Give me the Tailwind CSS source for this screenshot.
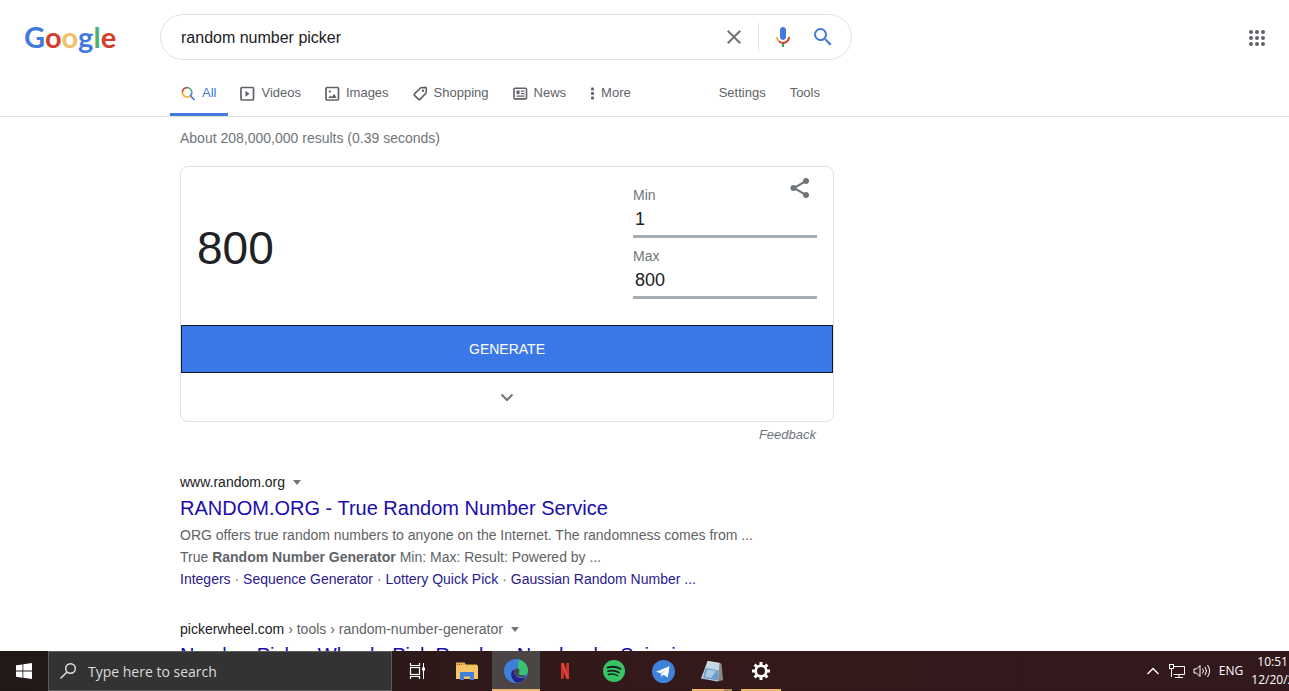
<!DOCTYPE html>
<html lang="en">
  <head>
    <meta charset="UTF-8" />
    <meta name="viewport" content="width=device-width, initial-scale=1.0" />
    <title>random number picker - Google Search</title>
    <script src="https://cdn.jsdelivr.net/npm/@tailwindcss/browser@4"></script>
  </head>
  <body
    class="h-screen overflow-hidden bg-white font-['Liberation_Sans',Arial,sans-serif] text-sm text-[#5f6368]"
  >
    <!-- ---------------- Header ---------------- -->
    <header class="border-b border-[#dfe1e5]">
      <div class="flex items-center pt-[14px]">
        <a
          href="#"
          aria-label="Google"
          class="w-[160px] shrink-0 pl-6 font-[Lato,sans-serif] text-[29px] leading-[44px] font-bold"
          ><span class="text-[#4179dd]">G</span
          ><span class="text-[#d23f2d]">o</span
          ><span class="text-[#f0c069]">o</span
          ><span class="text-[#4179dd]">g</span
          ><span class="text-[#4fae72]">l</span
          ><span class="text-[#d23f2d]">e</span></a
        >
        <form
          class="flex h-[46px] w-[692px] items-center rounded-full border border-[#dfe1e5] pr-4 pl-5"
        >
          <input
            type="text"
            aria-label="Search"
            value="random number picker"
            class="min-w-0 flex-1 pt-[2px] text-base text-[#202124] outline-none"
          />
          <button type="button" aria-label="Clear" class="px-3">
            <svg class="h-6 w-6" viewBox="0 0 24 24" fill="#70757a">
              <path
                d="M19 6.41L17.59 5 12 10.59 6.41 5 5 6.41 10.59 12 5 17.59 6.41 19 12 13.41 17.59 19 19 17.59 13.41 12z"
              />
            </svg>
          </button>
          <span class="mr-3 h-7 border-l border-[#dfe1e5]"></span>
          <button type="button" aria-label="Search by voice" class="mr-4">
            <svg class="h-6 w-6" viewBox="0 0 24 24">
              <path
                fill="#4179dd"
                d="M12 15c1.66 0 3-1.31 3-2.97V5c0-1.66-1.34-3-3-3S9 3.34 9 5v7c0 1.66 1.34 3 3 3z"
              />
              <path fill="#34a853" d="M11 18.1h2V22h-2z" />
              <path
                fill="#f0b43c"
                d="M7.05 16.87A6.9 6.9 0 0 1 5 12h2c0 1.45.56 2.42 1.47 3.35z"
              />
              <path
                fill="#d23f2d"
                d="M12 16.93a4.97 4.97 0 0 1-3.54-1.55l-1.41 1.49A6.94 6.94 0 0 0 12 19c3.87 0 6.99-2.92 6.99-7h-1.99c0 2.92-2.24 4.93-5 4.93z"
              />
            </svg>
          </button>
          <button type="submit" aria-label="Search">
            <svg class="h-6 w-6" viewBox="0 0 24 24" fill="#4179dd">
              <path
                d="M15.5 14h-.79l-.28-.27A6.47 6.47 0 0 0 16 9.5 6.5 6.5 0 1 0 9.5 16c1.61 0 3.09-.59 4.23-1.57l.27.28v.79l5 4.99L20.49 19zm-6 0C7.01 14 5 11.99 5 9.5S7.01 5 9.5 5 14 7.01 14 9.5 11.99 14 9.5 14z"
              />
            </svg>
          </button>
        </form>
        <button
          type="button"
          aria-label="Google apps"
          class="mr-5 ml-auto pt-[2px]"
        >
          <svg class="h-6 w-6" viewBox="0 0 24 24" fill="#5f6368">
            <circle cx="6" cy="6" r="2" />
            <circle cx="12" cy="6" r="2" />
            <circle cx="18" cy="6" r="2" />
            <circle cx="6" cy="12" r="2" />
            <circle cx="12" cy="12" r="2" />
            <circle cx="18" cy="12" r="2" />
            <circle cx="6" cy="18" r="2" />
            <circle cx="12" cy="18" r="2" />
            <circle cx="18" cy="18" r="2" />
          </svg>
        </button>
      </div>

      <!-- Search type tabs -->
      <nav class="flex h-14 w-[852px] items-stretch pt-[14px] pl-[170px] text-[13px]">
        <a
          href="#"
          class="flex items-center gap-[6px] border-b-[3px] border-[#4179dd] pr-3 pl-[11px] text-[#4179dd]"
        >
          <svg class="h-4 w-[15px]" viewBox="0 0 15 16" fill="none" stroke-width="1.7">
            <path stroke="#d23f2d" d="M1.4 6A4.7 4.7 0 0 1 6 1.6" />
            <path stroke="#4fae72" d="M6 1.6A4.8 4.8 0 0 1 10.8 6.400" />
            <path stroke="#4179dd" d="M10.8 6.400A4.8 4.8 0 0 1 9.400 9.800L13.500 14" />
            <path stroke="#f0b43c" d="M1.4 6A4.8 4.8 0 0 0 9.400 9.800" />
          </svg>
          All
        </a>
        <a href="#" class="mb-[3px] flex items-center gap-[6px] px-3">
          <svg class="h-4 w-[15px]" viewBox="0 0 15 16" fill="none" stroke="#5f6368">
            <rect x="1" y="1.500" width="12.500" height="12.500" rx="1" stroke-width="1.700" />
            <path d="M5.500 4.800v6l4-3z" fill="#5f6368" stroke="none" />
          </svg>
          Videos
        </a>
        <a href="#" class="mb-[3px] flex items-center gap-[6px] px-3">
          <svg class="h-4 w-[15px]" viewBox="0 0 15 16" fill="none" stroke="#5f6368">
            <rect x="1" y="1.500" width="12.500" height="12.500" rx="1" stroke-width="1.700" />
            <path d="M3.200 12l2-2.500 1.500 1.200L9.200 8l2.500 4z" fill="#5f6368" stroke="none" />
            <rect x="3.800" y="4.500" width="2" height="2" fill="#5f6368" stroke="none" />
          </svg>
          Images
        </a>
        <a href="#" class="mb-[3px] flex items-center gap-[6px] px-3">
          <svg class="h-4 w-[15px]" viewBox="0 0 15 16" fill="none" stroke="#5f6368">
            <path
              d="M7.7 1.7L12.6 1.4Q13.4 1.4 13.4 2.3L13 7.100 7 13.300Q6.300 13.900 5.600 13.300L1.500 9.400Q.9 8.700 1.500 7.900z"
              stroke-width="1.6"
            />
            <circle cx="10" cy="4.700" r="1.200" fill="#5f6368" stroke="none" />
          </svg>
          Shopping
        </a>
        <a href="#" class="mb-[3px] flex items-center gap-[6px] px-3">
          <svg class="h-4 w-[15px]" viewBox="0 0 15 16" fill="none" stroke="#5f6368">
            <rect x="1" y="2.300" width="12.500" height="10.600" rx="1" stroke-width="1.600" />
            <rect x="3.500" y="4.500" width="3" height="3.600" fill="#5f6368" stroke="none" />
            <path d="M8 5.200h3.500M8 7.700h3.500M3.500 10.200h8" stroke-width="1.200" />
          </svg>
          News
        </a>
        <a href="#" class="mb-[3px] flex items-center gap-1 pr-3 pl-[11px]">
          <svg class="h-4 w-2" viewBox="0 0 8 16" fill="#5f6368">
            <rect x="2" y="1.500" width="3" height="3" rx="1" />
            <rect x="2" y="6" width="3" height="3" rx="1" />
            <rect x="2" y="10.500" width="3" height="3" rx="1" />
          </svg>
          More
        </a>
        <a href="#" class="mb-[3px] ml-auto flex items-center px-3">Settings</a>
        <a href="#" class="mr-5 mb-[3px] flex items-center px-3">Tools</a>
      </nav>
    </header>

    <!-- ---------------- Results ---------------- -->
    <main class="ml-[180px] w-[654px]">
      <p class="pt-[11px] leading-5 text-[#70757a]">
        About 208,000,000 results (0.39 seconds)
      </p>

      <!-- Random number widget -->
      <section class="mt-[18px] rounded-lg border border-[#dfe1e5]">
        <div class="flex h-[158px]">
          <output class="flex flex-1 items-center pt-[5px] pl-4 text-[46px] text-[#202124]"
            >800</output
          >
          <div class="w-[184px] pt-[18px]">
            <label for="min" class="block leading-5 text-[#70757a]">Min</label>
            <input
              id="min"
              type="text"
              value="1"
              class="mb-2 block h-[33px] w-full border-b-[3px] border-[#a3adb3] px-[2px] pb-[2px] text-lg font-medium text-[#202124]"
            />
            <label for="max" class="block leading-5 text-[#70757a]">Max</label>
            <input
              id="max"
              type="text"
              value="800"
              class="block h-[33px] w-full border-b-[3px] border-[#a3adb3] px-[2px] pb-[2px] text-lg font-medium text-[#202124]"
            />
          </div>
          <div class="w-4">
            <button type="button" aria-label="Share" class="-ml-[29px] pt-[9px]">
              <svg class="h-6 w-6" viewBox="0 0 24 24" fill="#70757a">
                <path d="M5.6 11.1L17.3 4.2l1 1.7L6.6 12.9z" />
                <path d="M5.6 12.9L17.3 19.8l1-1.7L6.6 11.1z" />
                <circle cx="5.5" cy="12" r="3" />
                <circle cx="18" cy="5" r="3" />
                <circle cx="18" cy="19" r="3" />
              </svg>
            </button>
          </div>
        </div>
        <button
          type="button"
          class="block h-12 w-full border border-[#101820] bg-[#3b78e7] text-white"
        >
          GENERATE
        </button>
        <button
          type="button"
          aria-label="Expand"
          class="flex h-12 w-full items-center justify-center"
        >
          <svg class="h-4 w-4" viewBox="0 0 16 16" fill="none" stroke="#70757a">
            <path d="M2.500 5.500L8 11l5.500-5.500" stroke-width="2" />
          </svg>
        </button>
      </section>
      <div class="pt-[3px] pr-[18px] text-right text-[13px] leading-5">
        <a href="#" class="text-[#70757a] italic">Feedback</a>
      </div>

      <!-- Result: random.org -->
      <article class="pt-7">
        <div class="flex items-center gap-2 leading-[19px] text-[#202124]">
          www.random.org
          <svg class="h-[5px] w-2" viewBox="0 0 8 5" fill="#70757a">
            <path d="M0 0h8L4 5z" />
          </svg>
        </div>
        <h3 class="text-xl leading-8 text-[#1a0dab]">
          <a href="#">RANDOM.ORG - True Random Number Service</a>
        </h3>
        <p class="leading-[22px]">
          ORG offers true random numbers to anyone on the Internet. The
          randomness comes from ...<br />True <b>Random Number Generator</b>
          Min: Max: Result: Powered by ...
        </p>
        <p class="leading-[22px] text-[#70757a]">
          <a href="#" class="text-[#2a1a8c]">Integers</a> ·
          <a href="#" class="text-[#2a1a8c]">Sequence Generator</a> ·
          <a href="#" class="text-[#2a1a8c]">Lottery Quick Pick</a> ·
          <a href="#" class="text-[#2a1a8c]">Gaussian Random Number ...</a>
        </p>
      </article>

      <!-- Result: pickerwheel.com -->
      <article class="pt-[30px]">
        <div class="flex items-center gap-2 leading-[19px]">
          <span
            ><span class="text-[#202124]">pickerwheel.com</span> › tools ›
            random-number-generator</span
          >
          <svg class="h-[5px] w-2" viewBox="0 0 8 5" fill="#70757a">
            <path d="M0 0h8L4 5z" />
          </svg>
        </div>
        <h3 class="text-xl leading-8 text-[#1a0dab]">
          <a href="#">Number Picker Wheel - Pick Random Number by Spinning</a>
        </h3>
      </article>
    </main>

    <!-- ---------------- Taskbar ---------------- -->
    <footer
      class="fixed bottom-0 left-0 flex h-10 w-full overflow-hidden bg-linear-to-r from-[#211817] via-[#34191a] to-[#32191c] font-['Open_Sans',sans-serif] text-white"
    >
      <button
        type="button"
        aria-label="Start"
        class="flex w-12 items-center justify-center"
      >
        <svg class="h-4 w-4" viewBox="0 0 16 16" fill="#fff">
          <path
            d="M0 2.300L6.500 1.400V7.600H0zM7.300 1.300L16 0V7.600H7.300zM0 8.400H6.500V14.700L0 13.800zM7.300 8.400H16V16L7.300 14.800z"
          />
        </svg>
      </button>
      <label
        class="flex w-[344px] items-center gap-3 border border-[#5c5c5c] bg-[#333] pl-[11px]"
      >
        <svg
          class="h-4 w-4 shrink-0"
          viewBox="0 0 16 16"
          fill="none"
          stroke="#e4e4e4"
          stroke-width="1.400"
        >
          <circle cx="10.500" cy="5.500" r="4.800" />
          <path d="M7 9L.5 15.500" />
        </svg>
        <input
          type="text"
          aria-label="Type here to search"
          placeholder="Type here to search"
          class="min-w-0 flex-1 pt-[2px] text-sm placeholder:text-[#dcdcdc]"
        />
      </label>

      <!-- Pinned apps -->
      <div class="ml-[2px] flex gap-px">
        <button
          type="button"
          aria-label="Task View"
          class="flex w-12 items-center justify-center"
        >
          <svg class="h-4 w-[18px]" viewBox="0 0 18 16" fill="none" stroke="#fff">
            <path d="M1.500 0v2.500h9V0M1.500 16v-2.500h9V16" stroke-width="1.200" />
            <rect x="1.500" y="4.500" width="9" height="7" stroke-width="1.200" />
            <path d="M14.500 0v16" stroke-width="1" />
            <rect x="13" y="4.500" width="3" height="3" fill="#fff" stroke="none" />
          </svg>
        </button>
        <button
          type="button"
          aria-label="File Explorer"
          class="flex w-12 items-center justify-center"
        >
          <svg class="h-5 w-[22px]" viewBox="0 0 22 20">
            <path d="M0 1.500h8.500l1.500 2H21V18H0z" fill="#e8b14c" />
            <path d="M0 4.500h22V18H0z" fill="#f5c466" />
            <path d="M1 3.500h6" stroke="#c8502d" stroke-dasharray="1 1" />
            <path d="M4 19v-7q0-1 1-1h12q1 0 1 1v7h-4v-3.500H8V19z" fill="#4080dc" />
          </svg>
        </button>
        <button
          type="button"
          aria-label="Microsoft Edge"
          class="flex w-12 items-center justify-center border-b-2 border-[#f0b768] bg-[#4b4645] pt-[2px]"
        >
          <svg class="h-6 w-6" viewBox="0 0 24 24">
            <circle cx="12" cy="12" r="12" fill="#3d7fd9" />
            <path
              d="M15 .4C20.500 1.800 24 6.500 24 11.500c0 3-2.500 4.700-5.500 4.700-2.500 0-4-.8-4-1.800 1.500-1.500 1.300-4.600-1-6.200z"
              fill="#38c46c"
            />
            <path
              d="M8.200 11.500c-2 3.500-1 8.500 3.500 12 4.500.2 8-1.800 10.200-5.300-4 1.600-10.700 1-11.500-4.700-.1-1 .4-2.500 1-3z"
              fill="#26218a"
            />
            <path
              d="M11.500 9.500c-1.500 1.500-1.400 4.500 0 6.500 2 2 6.500 2.800 10.500 1.500l-1.500-1.300c-2.500.4-6-.3-6-1.800 1-1.300 1.300-3.400-.2-5z"
              fill="#4b4645"
            />
          </svg>
        </button>
        <button
          type="button"
          aria-label="Netflix"
          class="flex w-12 items-center justify-center"
        >
          <svg class="h-4 w-2" viewBox="0 0 8 16">
            <path d="M0 0h2.800v15.500L0 16zM5.200 0H8v16l-2.800-.5z" fill="#d0352c" />
            <path d="M0 0h2.800L8 16l-2.800-.5z" fill="#e8412f" />
          </svg>
        </button>
        <button
          type="button"
          aria-label="Spotify"
          class="flex w-12 items-center justify-center"
        >
          <svg class="h-[22px] w-[22px]" viewBox="0 0 22 22" fill="none">
            <circle cx="11" cy="11" r="11" fill="#35c565" />
            <g stroke="#1b1b1b" stroke-linecap="round">
              <path d="M4.500 7.600c4.300-1.300 9.200-.9 13 1.200" stroke-width="2" />
              <path d="M5 11.200c3.800-1.100 7.800-.6 11 1.200" stroke-width="1.700" />
              <path d="M5.500 14.500c3.200-.8 6.300-.5 9 1.100" stroke-width="1.400" />
            </g>
          </svg>
        </button>
        <button
          type="button"
          aria-label="Telegram"
          class="flex w-12 items-center justify-center"
        >
          <svg class="h-[23px] w-[23px]" viewBox="0 0 23 23">
            <circle cx="11.500" cy="11.500" r="11.500" fill="#3f82dc" />
            <path d="M4 11.700L17.500 6.200 15.800 17.500 11.500 14.700 9.300 16.800 8.800 13.300z" fill="#fff" />
            <path d="M8.800 13.300L15 8.500 10.200 14.100 9.300 16.800z" fill="#b8cfe8" />
          </svg>
        </button>
        <button
          type="button"
          aria-label="Notepad"
          class="flex w-12 flex-col items-center justify-end gap-[7px]"
        >
          <svg class="h-[22px] w-[22px]" viewBox="0 0 22 22">
            <path d="M6.500 1L20.500 3.500 22 20 17 21.500z" fill="#8c8782" />
            <path d="M6.500 1L18.500 3 17 21.500 0 18.500z" fill="#c5d6e4" />
            <path d="M4.500 8L17.800 10.500 17 20.500 2 18z" fill="#6f9cc8" />
            <path d="M6 9.500l9 1.500-5 7-6-1z" fill="#a9cbe6" />
            <path d="M7 1.500l12 2" stroke="#eee" stroke-dasharray="1 1" />
          </svg>
          <span
            class="flex h-[2px] w-10 justify-end border-r-8 border-[#b58d5c] bg-[#f0b768]"
          ></span>
        </button>
        <button
          type="button"
          aria-label="Settings"
          class="flex w-12 flex-col items-center justify-end gap-2"
        >
          <svg class="h-5 w-5" viewBox="0 0 20 20" fill="none" stroke="#fff">
            <circle cx="10" cy="10" r="5.300" stroke-width="2.600" />
            <path
              d="M10 1v3M10 16v3M1 10h3M16 10h3M3.600 3.600l2.200 2.200M14.200 14.200l2.200 2.200M3.600 16.400l2.200-2.200M14.200 5.800l2.200-2.200"
              stroke-width="3"
            />
          </svg>
          <span class="h-[2px] w-10 bg-[#f0b768]"></span>
        </button>
      </div>

      <!-- System tray -->
      <div class="-mr-[26px] ml-auto flex shrink-0 items-center text-xs">
        <svg class="mr-[10px] h-3 w-3" viewBox="0 0 12 12" fill="none" stroke="#fff">
          <path d="M.5 9L6 3.500 11.500 9" stroke-width="1.300" />
        </svg>
        <svg class="mr-2 h-4 w-4" viewBox="0 0 16 16" fill="none" stroke="#fff">
          <path d="M5 3.500h10.500v8H4.500M10 11.500v3M6 14.500h8M2.500 6v8" />
          <rect x=".5" y="1.500" width="4" height="4" />
        </svg>
        <svg class="mr-2 h-4 w-[18px]" viewBox="0 0 18 16" fill="none" stroke="#fff">
          <path
            d="M1 6h2.500L7 2.500v11L3.500 10H1zM9.500 5.500q2 2.500 0 5M12 3.800q3 4.200 0 8.400M14.500 2q4.200 6 0 12"
          />
        </svg>
        <span class="mr-2">ENG</span>
        <time class="text-center leading-[18px]">10:51 PM<br />12/20/2020</time>
      </div>
    </footer>
  </body>
</html>
